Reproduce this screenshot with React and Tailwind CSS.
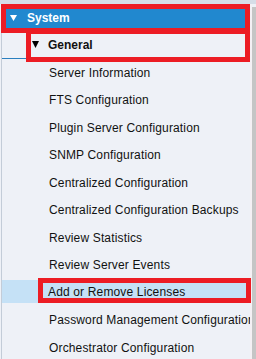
import React from "react";

const items = [
  "Server Information",
  "FTS Configuration",
  "Plugin Server Configuration",
  "SNMP Configuration",
  "Centralized Configuration",
  "Centralized Configuration Backups",
  "Review Statistics",
  "Review Server Events",
  "Add or Remove Licenses",
  "Password Management Configuration",
  "Orchestrator Configuration",
];

function Tri({ color, w, h }) {
  return (
    <svg width={w} height={h} viewBox={`0 0 ${w} ${h}`} className="shrink-0">
      <polygon points={`0,0 ${w},0 ${w / 2},${h}`} fill={color} />
    </svg>
  );
}

export default function App() {
  return (
    <div className="relative w-[256px] h-[359px] overflow-hidden bg-[#eef1f7] flex flex-col font-['Liberation_Sans',Arial,sans-serif] text-[12px] text-[#111]">
      <div className="h-[4px] shrink-0 bg-[#d6dde7]" />
      <div className="flex flex-1 min-h-0">
        <div className="w-[1px] shrink-0 bg-[#eef1f7]" />
        <div className="w-[1px] shrink-0 bg-[#c3ccd8]" />
        <div className="flex-1 min-w-0 flex flex-col">
          <div className="h-[27px] shrink-0 bg-[#2188cf] flex items-center pl-[8px] gap-[10px] text-white font-bold">
            <Tri color="#ffffff" w={7} h={6} />
            <span>System</span>
          </div>
          <div className="h-[28px] shrink-0 border-b border-[#2a7fbf] flex items-center pl-[30px] gap-[9px] font-bold">
            <Tri color="#000000" w={7} h={7} />
            <span>General</span>
          </div>
          {items.map((t) => {
            const sel = t === "Add or Remove Licenses";
            return (
              <div key={t} className="h-[27.5px] shrink-0 flex flex-col tracking-[0.15px]">
                {sel ? (
                  <div className="mt-[1px] h-[23px] bg-[#c5e1f6] flex items-center pl-[46px] whitespace-nowrap overflow-hidden">
                    {t}
                  </div>
                ) : (
                  <div className="h-full flex items-center pl-[47px] whitespace-nowrap overflow-hidden">
                    {t}
                  </div>
                )}
              </div>
            );
          })}
        </div>
        <div className="w-[2px] shrink-0 bg-[#f4f0f4]" />
        <div className="w-[4px] shrink-0 mt-[3px] bg-[#c5c5c5]" />
      </div>

      {/* red annotation boxes */}
      <div className="absolute left-[1px] top-[4px] w-[249px] h-[29px] border-[5px] border-[#ec1c24]" />
      <div className="absolute left-[26px] top-[29px] w-[224px] h-[33px] border-[5px] border-[#ec1c24]" />
      <div className="absolute left-[38px] top-[278px] w-[213px] h-[25px] border-[5px] border-[#ec1c24]" />
    </div>
  );
}
